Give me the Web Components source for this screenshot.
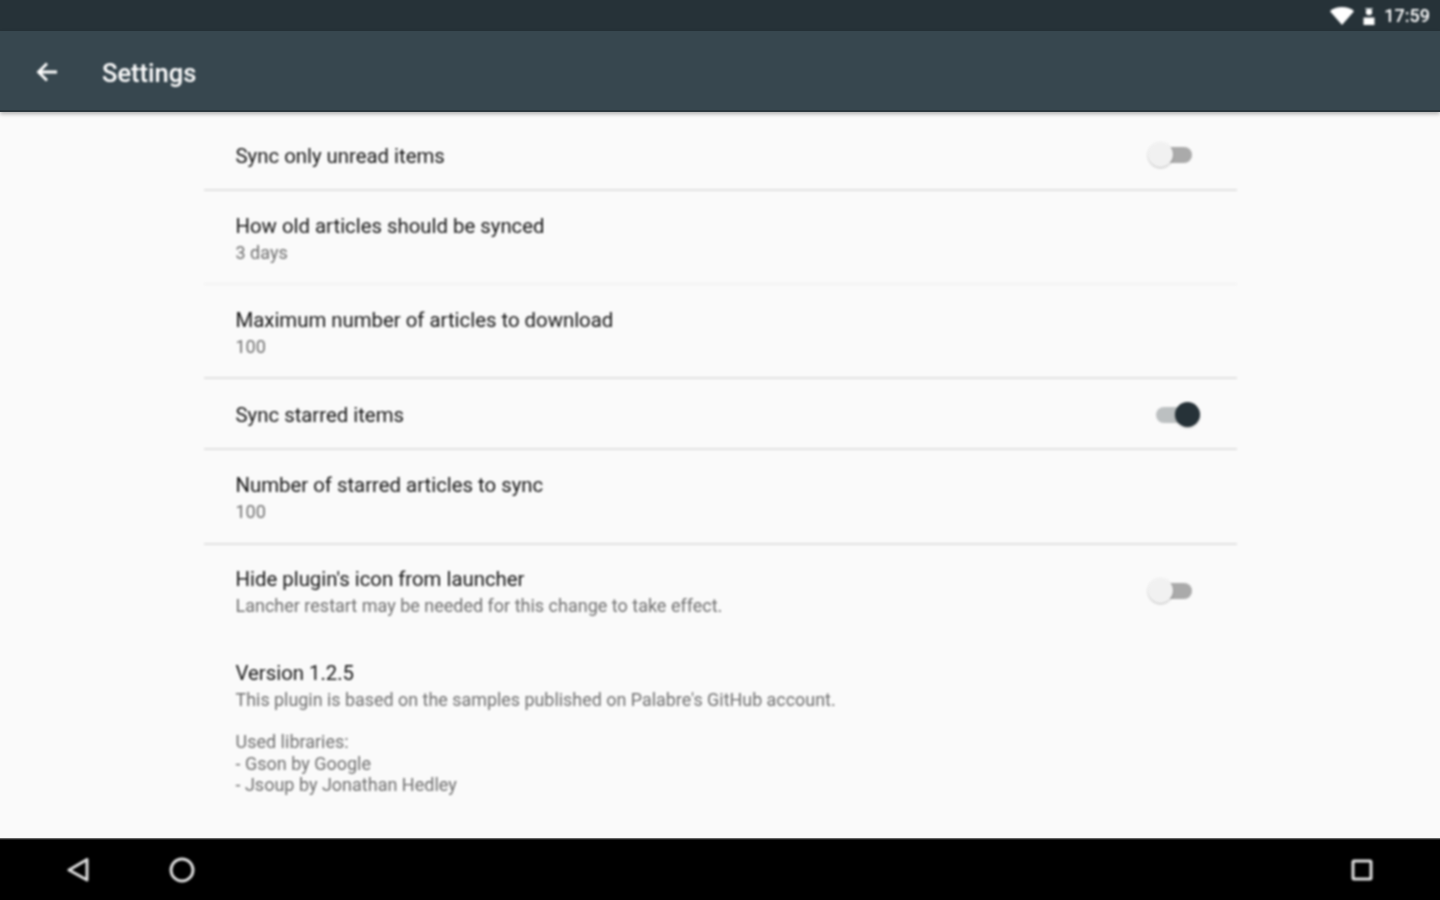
<!DOCTYPE html>
<html><head><meta charset="utf-8">
<style>
html,body{margin:0;padding:0;height:100%;background:#fafafa;overflow:hidden}
body{font-family:Roboto,"Liberation Sans",sans-serif}
</style></head><body>
<app-screen>
  <status-bar slot="status" time="17:59"></status-bar>
  <app-toolbar slot="toolbar" heading="Settings"></app-toolbar>
  <settings-row title-text="Sync only unread items" toggle="off" h="71" pt="2" divider="solid"></settings-row>
  <settings-row title-text="How old articles should be synced" sub="3 days" h="94" pt="5" divider="faint"></settings-row>
  <settings-row title-text="Maximum number of articles to download" sub="100" h="94" pt="5" divider="solid"></settings-row>
  <settings-row title-text="Sync starred items" toggle="on" h="71" pt="2" sw-shift="2" divider="solid"></settings-row>
  <settings-row title-text="Number of starred articles to sync" sub="100" h="95" pt="3" divider="solid"></settings-row>
  <settings-row title-text="Hide plugin's icon from launcher" sub="Lancher restart may be needed for this change to take effect." toggle="off" h="94" pt="1" sw-shift="-2"></settings-row>
  <about-block title-text="Version 1.2.5" sub="This plugin is based on the samples published on Palabre's GitHub account."></about-block>
  <nav-bar slot="nav"></nav-bar>
</app-screen>
<script>
function def(name, css, html){
  customElements.define(name, class extends HTMLElement{
    connectedCallback(){
      if(this.shadowRoot) return;
      const r=this.attachShadow({mode:'open'});
      r.innerHTML='<style>'+css+'</style>'+(typeof html==='function'?html(this):html);
    }
  });
}
def('app-screen',`
 :host{display:flex;flex-direction:column;height:900px;width:1440px;background:#fafafa}
 main{flex:1;min-height:0;display:flex;flex-direction:column;padding:8px 203px 0 204px;filter:blur(.8px)}
`,`<slot name="status"></slot><slot name="toolbar"></slot><main><slot></slot></main><slot name="nav"></slot>`);
def('status-bar',`
 :host{display:flex;height:31px;background:#263238;color:#fff;align-items:center;justify-content:flex-end;padding-right:10px;box-sizing:border-box;font-size:18px;font-weight:500}
 :host>*{filter:blur(.8px)}
 svg{display:block}
 .w{margin-right:8px}.u{margin-right:8px}
`,h=>`<svg class="w" width="24" height="18" viewBox="0 0 24 18"><path d="M0 4.200C3 1.400 7.300 0 12 0s9 1.400 12 4.200L12 18z" fill="#fff"/></svg>
 <svg class="u" width="14" height="20" viewBox="0 0 14 20"><circle cx="7" cy="6" r="3.200" fill="#fff"/><path d="M1.500 11.500h11V19h-11z" fill="#fff"/><path d="M3 2h8v1.200H3z" fill="#b9c2c6"/></svg>
 <span>${h.getAttribute('time')}</span>`);
def('app-toolbar',`
 :host{display:flex;height:81px;background:#37474f;color:#fff;align-items:center;box-sizing:border-box;box-shadow:0 2px 4px rgba(0,0,0,.3);border-bottom:2px solid #2b373d;position:relative;padding:3px 0 0 35px}
 :host>*{filter:blur(.8px)}
 svg{display:block;margin-right:43px}
 span{font-size:25.500px;font-weight:500;padding-top:2px}
`,h=>`<svg width="24" height="24" viewBox="0 0 24 24"><path d="M22 12H4M12 3.500 3.500 12l8.500 8.500" fill="none" stroke="#fff" stroke-width="2.800"/></svg><span>${h.getAttribute('heading')}</span>`);
def('settings-row',`
 :host{display:flex;box-sizing:border-box;align-items:center;padding:0 36px 0 31.500px}
 .t{flex:1;min-width:0}
 .a{font-size:20.350px;line-height:26px;color:#141414}
 .b{font-size:18px;line-height:26px;margin-top:1px;color:#6e6e6e}
 .sw{position:relative;width:52px;height:30px;flex:none}
 .track{position:absolute;top:7px;height:16px;border-radius:8px}
 .thumb{position:absolute;top:2px;width:25px;height:25px;border-radius:50%;box-shadow:0 1px 2px rgba(0,0,0,.25)}
`,h=>{
  const t=h.getAttribute('toggle'),s=h.getAttribute('sub'),d=h.getAttribute('divider'),pt=h.getAttribute('pt')||0,sh=+h.getAttribute('sw-shift')||0;
  h.style.height=h.getAttribute('h')+'px';
  if(d) h.style.borderBottom='2px solid '+(d==='faint'?'#f3f3f3':'#e2e2e2');
  const shift=sh>0?`margin-top:${sh}px;`:sh<0?`margin-bottom:${-sh}px;`:'';
  const sw=t==='on'
    ?`<div class="sw" style="${shift}"><div class="track" style="left:7px;width:36px;background:#bcc0c1"></div><div class="thumb" style="left:26px;background:#263238"></div></div>`
    :t==='off'?`<div class="sw" style="margin-right:1px;${shift}"><div class="track" style="left:10px;width:34px;background:#aaa"></div><div class="thumb" style="left:0;background:#f1f1f1"></div></div>`:'';
  return `<div class="t" style="padding-top:${pt}px"><div class="a">${h.getAttribute('title-text')}</div>${s?`<div class="b">${s}</div>`:''}</div>${sw}`;
});
def('about-block',`
 :host{display:block;padding:21px 0 0 31.500px}
 .a{font-size:20.350px;line-height:27px;color:#141414}
 .b{font-size:17.900px;line-height:26px;color:#6e6e6e}
 .c{font-size:18px;line-height:21px;color:#6e6e6e;margin-top:17.500px}
 .h{margin-bottom:1px}
`,h=>`<div class="a">${h.getAttribute('title-text')}</div><div class="b">${h.getAttribute('sub')}</div><div class="c"><div class="h">Used libraries:</div>- Gson by Google<br>- Jsoup by Jonathan Hedley</div>`);
def('nav-bar',`
 :host{display:block;height:62px;box-sizing:border-box;padding-top:2px;background:linear-gradient(#8a8a8a 0,#444 1px,#000 2px)}
 .r{display:flex;align-items:center;height:100%;padding:0 66px 0 65px}
 svg{display:block;filter:blur(.8px)}
 .sp{flex:1}
`,`<div class="r"><svg width="26" height="30" viewBox="0 0 26 30"><path d="M22 4.500V25L4 15z" fill="none" stroke="#ddd" stroke-width="3" stroke-linejoin="round"/></svg>
 <svg style="margin-left:77px" width="28" height="28" viewBox="0 0 28 28"><circle cx="14" cy="14" r="11" fill="none" stroke="#ddd" stroke-width="3"/></svg>
 <div class="sp"></div>
 <svg width="24" height="24" viewBox="0 0 24 24"><rect x="3" y="3" width="18" height="18" rx="1" fill="none" stroke="#ddd" stroke-width="3"/></svg></div>`);
</script>
</body></html>
